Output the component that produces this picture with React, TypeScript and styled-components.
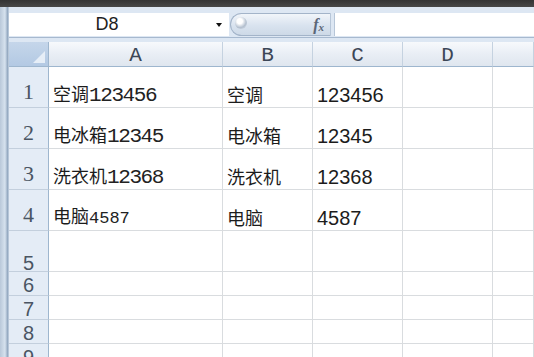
import styled, { createGlobalStyle } from 'styled-components';

const GlobalStyle = createGlobalStyle`
  html, body {
    margin: 0;
    padding: 0;
    width: 534px;
    height: 357px;
    overflow: hidden;
    background: #ffffff;
  }
`;

type Cell = {
  text?: string;
  kind?: 'mixed' | 'cjk' | 'num' | 'small';
};

type RowData = {
  num: string;
  height: number;
  serif: boolean;
  pad: number;
  cells: Cell[];
};

const columns = ['A', 'B', 'C', 'D', ''];
const empty: Cell[] = [{}, {}, {}, {}, {}];

const rows: RowData[] = [
  {
    num: '1',
    height: 41,
    serif: true,
    pad: 4,
    cells: [{ text: '空调123456', kind: 'mixed' }, { text: '空调', kind: 'cjk' }, { text: '123456', kind: 'num' }, {}, {}],
  },
  {
    num: '2',
    height: 41,
    serif: true,
    pad: 4,
    cells: [{ text: '电冰箱12345', kind: 'mixed' }, { text: '电冰箱', kind: 'cjk' }, { text: '12345', kind: 'num' }, {}, {}],
  },
  {
    num: '3',
    height: 41,
    serif: true,
    pad: 4,
    cells: [{ text: '洗衣机12368', kind: 'mixed' }, { text: '洗衣机', kind: 'cjk' }, { text: '12368', kind: 'num' }, {}, {}],
  },
  {
    num: '4',
    height: 41,
    serif: true,
    pad: 4,
    cells: [{ text: '电脑4587', kind: 'small' }, { text: '电脑', kind: 'cjk' }, { text: '4587', kind: 'num' }, {}, {}],
  },
  { num: '5', height: 41, serif: false, pad: 0, cells: empty },
  { num: '6', height: 24, serif: false, pad: 2, cells: empty },
  { num: '7', height: 24, serif: false, pad: 2, cells: empty },
  { num: '8', height: 24, serif: false, pad: 2, cells: empty },
  { num: '9', height: 24, serif: false, pad: 2, cells: empty },
];

export default function App() {
  return (
    <>
      <GlobalStyle />
      <Window>
        <TitleBar />
        <Body>
          <SideStrip />
          <Workspace>
            <FormulaBar>
              <NameBox>
                <NameText>D8</NameText>
                <DropArrow />
              </NameBox>
              <FxPill>
                <ExpandDot />
                <FxLabel>
                  f<sub>x</sub>
                </FxLabel>
              </FxPill>
              <FormulaInput />
            </FormulaBar>
            <Sheet>
              <CornerCell>
                <CornerTriangle />
              </CornerCell>
              {columns.map((c, i) => (
                <ColHeader key={i}>{c}</ColHeader>
              ))}
              {rows.map((r) => (
                <Row key={r.num} r={r} />
              ))}
            </Sheet>
          </Workspace>
        </Body>
      </Window>
    </>
  );
}

function CellText({ cell }: { cell: Cell }) {
  if (!cell.text) return null;
  if (cell.kind !== 'mixed' && cell.kind !== 'small') return <>{cell.text}</>;
  const m = cell.text.match(/^(\D*)(\d*)$/);
  const cjk = m ? m[1] : cell.text;
  const digits = m ? m[2] : '';
  return (
    <>
      {cjk}
      <Digits $small={cell.kind === 'small'}>{digits}</Digits>
    </>
  );
}

function Row({ r }: { r: RowData }) {
  return (
    <>
      <RowHeader $height={r.height} $serif={r.serif} $pad={r.pad}>
        {r.num}
      </RowHeader>
      {r.cells.map((c, i) => (
        <DataCell key={i} $kind={c.kind} $height={r.height}>
          <CellText cell={c} />
        </DataCell>
      ))}
    </>
  );
}

const Window = styled.div`
  width: 534px;
  height: 357px;
  display: flex;
  flex-direction: column;
  overflow: hidden;
`;

const TitleBar = styled.div`
  height: 7px;
  flex: none;
  background: linear-gradient(#343434, #474747);
`;

const Body = styled.div`
  flex: 1;
  display: flex;
  min-height: 0;
`;

const SideStrip = styled.div`
  width: 9px;
  flex: none;
  background: linear-gradient(90deg, #b9c8d9 0%, #d6e2ee 55%, #93a8c0 85%, #cbd8e6 100%);
`;

const Workspace = styled.div`
  flex: 1;
  display: flex;
  flex-direction: column;
  min-width: 0;
  min-height: 0;
  background: #dde7f3;
`;

const FormulaBar = styled.div`
  flex: none;
  height: 23px;
  margin-top: 6px;
  padding-bottom: 1px;
  margin-bottom: 4px;
  display: flex;
  align-items: stretch;
  border-bottom: 1px solid #a7b9cf;
  box-sizing: content-box;
`;

const NameBox = styled.div`
  width: 220px;
  flex: none;
  position: relative;
  background: #ffffff;
  display: flex;
  align-items: center;
`;

const NameText = styled.span`
  width: 196px;
  text-align: center;
  font-family: 'Liberation Sans', Arial, sans-serif;
  font-size: 18px;
  color: #1e1e1e;
`;

const DropArrow = styled.span`
  position: absolute;
  right: 7px;
  top: 10px;
  width: 0;
  height: 0;
  border-left: 3.5px solid transparent;
  border-right: 3.5px solid transparent;
  border-top: 4px solid #111;
`;

const FxPill = styled.div`
  width: 101px;
  flex: none;
  margin-left: 1px;
  border: 1px solid #a3b4c9;
  border-right-color: #b7c6d8;
  border-radius: 12px 0 0 12px;
  background: linear-gradient(#f1f5fa, #d9e3ef 55%, #cdd9e7);
  display: flex;
  align-items: center;
  justify-content: space-between;
  padding: 0 6px 0 4px;
  box-sizing: border-box;
`;

const ExpandDot = styled.span`
  width: 12px;
  height: 12px;
  border-radius: 50%;
  margin-top: -4px;
  background: radial-gradient(circle at 40% 35%, #ffffff 0 25%, #b4c0cf 60%, #dfe6ef 100%);
`;

const FxLabel = styled.span`
  font-family: 'Liberation Serif', 'Times New Roman', serif;
  font-style: italic;
  font-weight: bold;
  font-size: 16px;
  color: #5b6677;

  sub {
    font-size: 11px;
    vertical-align: -1px;
  }
`;

const FormulaInput = styled.div`
  flex: 1;
  margin-left: 3px;
  background: #ffffff;
  border-left: 1px solid #b7c6d8;
`;

const Sheet = styled.div`
  flex: 1;
  min-height: 0;
  overflow: hidden;
  display: grid;
  grid-template-columns: 40px 174px 90px 90px 90px 1fr;
  grid-auto-rows: min-content;
  align-content: start;
  background: #ffffff;
`;

const HeaderBase = styled.div`
  height: 25px;
  box-sizing: border-box;
  border-bottom: 1px solid #9eb6ce;
  border-right: 1px solid #c5d2e0;
`;

const CornerCell = styled(HeaderBase)`
  position: relative;
  background: linear-gradient(#c5d6ea, #b3c9e3);
  border-right-color: #9eb6ce;
`;

const CornerTriangle = styled.span`
  position: absolute;
  right: 3px;
  bottom: 3px;
  width: 0;
  height: 0;
  border-left: 12px solid transparent;
  border-bottom: 12px solid #e6eef7;
`;

const ColHeader = styled(HeaderBase)`
  background: linear-gradient(#f7f9fc, #e9eef5 50%, #dfe6ef);
  display: flex;
  align-items: center;
  justify-content: center;
  padding-top: 3px;
  font-family: 'Liberation Mono', 'Courier New', monospace;
  font-size: 21px;
  line-height: 1;
  color: #3c4656;
`;

const RowHeader = styled.div<{ $height: number; $serif: boolean; $pad: number }>`
  height: ${(p) => p.$height}px;
  box-sizing: border-box;
  background: #e4ecf6;
  border-bottom: 1px solid #c3cfdd;
  border-right: 1px solid #9eb6ce;
  display: flex;
  align-items: flex-end;
  justify-content: center;
  padding-bottom: ${(p) => p.$pad}px;
  font-family: ${(p) =>
    p.$serif
      ? "'Liberation Serif', 'Times New Roman', serif"
      : "'Liberation Sans', Arial, sans-serif"};
  font-size: ${(p) => (p.$serif ? 22 : 20)}px;
  line-height: ${(p) => (p.$serif ? '22px' : '16px')};
  color: #4a5563;
`;

const kindFont = {
  mixed: "'Noto Sans CJK SC', sans-serif",
  small: "'Noto Sans CJK SC', sans-serif",
  cjk: "'Noto Sans CJK SC', sans-serif",
  num: "'Liberation Sans', Arial, sans-serif",
};

const DataCell = styled.div<{ $kind?: Cell['kind']; $height: number }>`
  height: ${(p) => p.$height}px;
  box-sizing: border-box;
  border-bottom: 1px solid #d9dcdf;
  border-right: 1px solid #d9dcdf;
  display: flex;
  align-items: baseline;
  align-content: flex-end;
  flex-wrap: wrap;
  padding: 0 0 ${(p) => (p.$kind === 'num' ? 1 : 2)}px 4px;
  overflow: hidden;
  white-space: nowrap;
  font-family: ${(p) => kindFont[p.$kind ?? 'cjk']};
  font-size: ${(p) => (p.$kind === 'num' ? 20 : 18)}px;
  line-height: 1.1;
  color: #1c1c1c;
`;

const Digits = styled.span<{ $small: boolean }>`
  font-family: 'Liberation Mono', 'Courier New', monospace;
  font-size: ${(p) => (p.$small ? 17 : 21)}px;
  line-height: 18px;
  letter-spacing: ${(p) => (p.$small ? 0 : -1.4)}px;
  color: #222;
`;
